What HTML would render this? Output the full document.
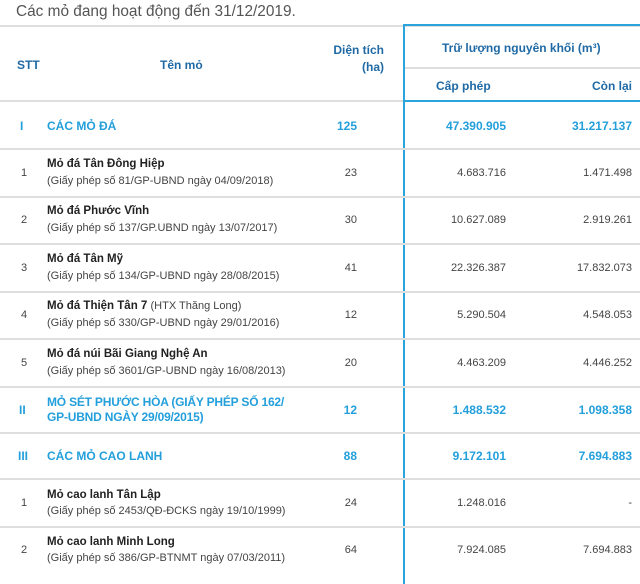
<!DOCTYPE html>
<html><head><meta charset="utf-8"><style>
*{margin:0;padding:0;box-sizing:border-box}
body{width:640px;height:584px;background:#fff;position:relative;overflow:hidden;font-family:"Liberation Sans",sans-serif;color:#444}
.a{position:absolute;white-space:nowrap}
.g{position:absolute;left:0;width:640px;height:2px;background:#dedede}
.hb{color:#1f6aa5;font-weight:bold;font-size:12px}
.bl{color:#239fdb;font-weight:bold;font-size:12px}
.t{font-weight:bold;font-size:11.5px;color:#222}
.s{font-size:11px;color:#444}
.n{font-size:11px;color:#444}
.r{text-align:right}
</style></head><body>
<div class="a" style="left:16px;top:3px;font-size:15.4px;color:#555">Các mỏ đang hoạt động đến 31/12/2019.</div>
<div class="g" style="top:25px"></div>
<div class="g" style="top:100px"></div>
<div class="a" style="left:404px;top:67px;width:236px;height:2px;background:#dedede"></div>
<div class="a" style="left:404px;top:24px;width:236px;height:2px;background:#2ba3dc"></div>
<div class="a" style="left:404px;top:100px;width:236px;height:2px;background:#2ba3dc"></div>
<div class="a" style="left:403px;top:24px;width:2px;height:560px;background:#2ba3dc"></div>
<div class="g" style="top:148px"></div>
<div class="g" style="top:196px"></div>
<div class="g" style="top:243px"></div>
<div class="g" style="top:291px"></div>
<div class="g" style="top:338px"></div>
<div class="g" style="top:386px"></div>
<div class="g" style="top:432px"></div>
<div class="g" style="top:478px"></div>
<div class="g" style="top:526px"></div>

<div class="a hb" style="left:17px;top:58px">STT</div>
<div class="a hb" style="left:160px;top:58px">Tên mỏ</div>
<div class="a hb r" style="left:300px;top:42px;width:84px;line-height:17px">Diện tích<br>(ha)</div>
<div class="a hb" style="left:442px;top:41px">Trữ lượng nguyên khối (m³)</div>
<div class="a hb" style="left:436px;top:79px">Cấp phép</div>
<div class="a hb r" style="left:540px;top:79px;width:92px">Còn lại</div>

<div class="a bl" style="left:20px;top:119px">I</div>
<div class="a bl" style="left:47px;top:119px">CÁC MỎ ĐÁ</div>
<div class="a bl r" style="left:300px;top:119px;width:57px">125</div>
<div class="a bl r" style="left:420px;top:119px;width:86px">47.390.905</div>
<div class="a bl r" style="left:540px;top:119px;width:92px">31.217.137</div>

<div class="a n" style="left:21px;top:167px">1</div>
<div class="a t" style="left:47px;top:158px">Mỏ đá Tân Đông Hiệp</div>
<div class="a s" style="left:47px;top:175px">(Giấy phép số 81/GP-UBND ngày 04/09/2018)</div>
<div class="a n r" style="left:300px;top:167px;width:57px">23</div>
<div class="a n r" style="left:420px;top:167px;width:86px">4.683.716</div>
<div class="a n r" style="left:540px;top:167px;width:92px">1.471.498</div>

<div class="a n" style="left:21px;top:214px">2</div>
<div class="a t" style="left:47px;top:205px">Mỏ đá Phước Vĩnh</div>
<div class="a s" style="left:47px;top:222px">(Giấy phép số 137/GP.UBND ngày 13/07/2017)</div>
<div class="a n r" style="left:300px;top:214px;width:57px">30</div>
<div class="a n r" style="left:420px;top:214px;width:86px">10.627.089</div>
<div class="a n r" style="left:540px;top:214px;width:92px">2.919.261</div>

<div class="a n" style="left:21px;top:262px">3</div>
<div class="a t" style="left:47px;top:253px">Mỏ đá Tân Mỹ</div>
<div class="a s" style="left:47px;top:270px">(Giấy phép số 134/GP-UBND ngày 28/08/2015)</div>
<div class="a n r" style="left:300px;top:262px;width:57px">41</div>
<div class="a n r" style="left:420px;top:262px;width:86px">22.326.387</div>
<div class="a n r" style="left:540px;top:262px;width:92px">17.832.073</div>

<div class="a n" style="left:21px;top:309px">4</div>
<div class="a t" style="left:47px;top:300px">Mỏ đá Thiện Tân 7 <span style="font-weight:normal;color:#444;font-size:11px">(HTX Thăng Long)</span></div>
<div class="a s" style="left:47px;top:317px">(Giấy phép số 330/GP-UBND ngày 29/01/2016)</div>
<div class="a n r" style="left:300px;top:309px;width:57px">12</div>
<div class="a n r" style="left:420px;top:309px;width:86px">5.290.504</div>
<div class="a n r" style="left:540px;top:309px;width:92px">4.548.053</div>

<div class="a n" style="left:21px;top:357px">5</div>
<div class="a t" style="left:47px;top:348px">Mỏ đá núi Bãi Giang Nghệ An</div>
<div class="a s" style="left:47px;top:365px">(Giấy phép số 3601/GP-UBND ngày 16/08/2013)</div>
<div class="a n r" style="left:300px;top:357px;width:57px">20</div>
<div class="a n r" style="left:420px;top:357px;width:86px">4.463.209</div>
<div class="a n r" style="left:540px;top:357px;width:92px">4.446.252</div>

<div class="a bl" style="left:19px;top:403px">II</div>
<div class="a bl" style="left:47px;top:395px;line-height:15px;letter-spacing:-0.2px">MỎ SÉT PHƯỚC HÒA (GIẤY PHÉP SỐ 162/<br>GP-UBND NGÀY 29/09/2015)</div>
<div class="a bl r" style="left:300px;top:403px;width:57px">12</div>
<div class="a bl r" style="left:420px;top:403px;width:86px">1.488.532</div>
<div class="a bl r" style="left:540px;top:403px;width:92px">1.098.358</div>

<div class="a bl" style="left:18px;top:449px">III</div>
<div class="a bl" style="left:47px;top:449px">CÁC MỎ CAO LANH</div>
<div class="a bl r" style="left:300px;top:449px;width:57px">88</div>
<div class="a bl r" style="left:420px;top:449px;width:86px">9.172.101</div>
<div class="a bl r" style="left:540px;top:449px;width:92px">7.694.883</div>

<div class="a n" style="left:21px;top:497px">1</div>
<div class="a t" style="left:47px;top:489px">Mỏ cao lanh Tân Lập</div>
<div class="a s" style="left:47px;top:505px">(Giấy phép số 2453/QĐ-ĐCKS ngày 19/10/1999)</div>
<div class="a n r" style="left:300px;top:497px;width:57px">24</div>
<div class="a n r" style="left:420px;top:497px;width:86px">1.248.016</div>
<div class="a n r" style="left:540px;top:497px;width:92px">-</div>

<div class="a n" style="left:21px;top:544px">2</div>
<div class="a t" style="left:47px;top:536px">Mỏ cao lanh Minh Long</div>
<div class="a s" style="left:47px;top:552px">(Giấy phép số 386/GP-BTNMT ngày 07/03/2011)</div>
<div class="a n r" style="left:300px;top:544px;width:57px">64</div>
<div class="a n r" style="left:420px;top:544px;width:86px">7.924.085</div>
<div class="a n r" style="left:540px;top:544px;width:92px">7.694.883</div>
</body></html>
